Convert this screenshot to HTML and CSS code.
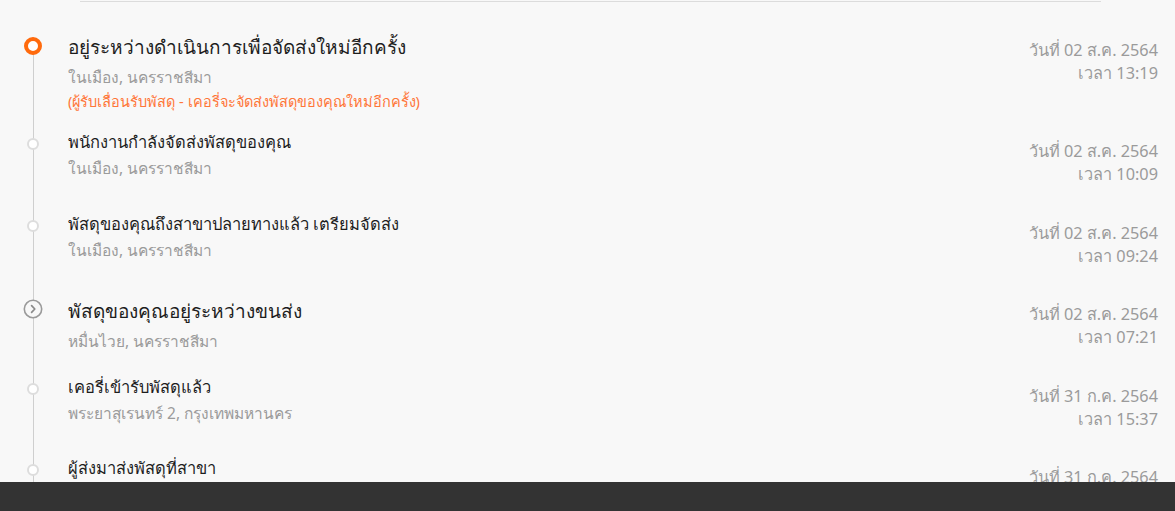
FILE: index.html
```html
<!DOCTYPE html>
<html lang="th">
<head>
<meta charset="utf-8">
<title>Tracking</title>
<link rel="stylesheet" href="styles.css">
</head>
<body>
<div class="page">
  <div class="top-rule"></div>
  <ul class="timeline">
    <li class="event event-big">
      <div class="marker"><span class="dot dot-current"></span></div>
      <div class="info">
        <div class="title">อยู่ระหว่างดำเนินการเพื่อจัดส่งใหม่อีกครั้ง</div>
        <div class="place">ในเมือง, นครราชสีมา</div>
        <div class="note">(ผู้รับเลื่อนรับพัสดุ - เคอรี่จะจัดส่งพัสดุของคุณใหม่อีกครั้ง)</div>
      </div>
      <div class="when">
        <div>วันที่ 02 ส.ค. 2564</div>
        <div>เวลา 13:19</div>
      </div>
    </li>
    <li class="event">
      <div class="marker"><span class="dot"></span></div>
      <div class="info">
        <div class="title">พนักงานกำลังจัดส่งพัสดุของคุณ</div>
        <div class="place">ในเมือง, นครราชสีมา</div>
      </div>
      <div class="when">
        <div>วันที่ 02 ส.ค. 2564</div>
        <div>เวลา 10:09</div>
      </div>
    </li>
    <li class="event">
      <div class="marker"><span class="dot"></span></div>
      <div class="info">
        <div class="title">พัสดุของคุณถึงสาขาปลายทางแล้ว เตรียมจัดส่ง</div>
        <div class="place">ในเมือง, นครราชสีมา</div>
      </div>
      <div class="when">
        <div>วันที่ 02 ส.ค. 2564</div>
        <div>เวลา 09:24</div>
      </div>
    </li>
    <li class="event event-big">
      <div class="marker">
        <span class="dot dot-transit">
          <svg viewBox="0 0 20 20" width="20" height="20"><circle cx="10" cy="10" r="8.7" fill="#f8f8f8" stroke="#9a9a9a" stroke-width="1.6"/><path d="M8.6 6.6 L11.8 10 L8.6 13.4" fill="none" stroke="#8a8a8a" stroke-width="1.7" stroke-linecap="round" stroke-linejoin="round"/></svg>
        </span>
      </div>
      <div class="info">
        <div class="title">พัสดุของคุณอยู่ระหว่างขนส่ง</div>
        <div class="place">หมื่นไวย, นครราชสีมา</div>
      </div>
      <div class="when">
        <div>วันที่ 02 ส.ค. 2564</div>
        <div>เวลา 07:21</div>
      </div>
    </li>
    <li class="event">
      <div class="marker"><span class="dot"></span></div>
      <div class="info">
        <div class="title">เคอรี่เข้ารับพัสดุแล้ว</div>
        <div class="place">พระยาสุเรนทร์ 2, กรุงเทพมหานคร</div>
      </div>
      <div class="when">
        <div>วันที่ 31 ก.ค. 2564</div>
        <div>เวลา 15:37</div>
      </div>
    </li>
    <li class="event">
      <div class="marker"><span class="dot"></span></div>
      <div class="info">
        <div class="title">ผู้ส่งมาส่งพัสดุที่สาขา</div>
      </div>
      <div class="when">
        <div>วันที่ 31 ก.ค. 2564</div>
      </div>
    </li>
  </ul>
</div>
<footer class="footer-bar"></footer>
</body>
</html>
```
FILE: styles.css
```css
html, body {
  margin: 0;
  padding: 0;
}
body {
  background: #f8f8f8;
  font-family: "Noto Sans", "DejaVu Sans", sans-serif;
  color: #222;
  height: 511px;
  overflow: hidden;
}
.page {
  height: 482px;
  overflow: hidden;
}
.top-rule {
  margin: 1px 74px 0 80px;
  border-top: 1px solid #dcdcdc;
}
.timeline {
  list-style: none;
  margin: 0;
  padding: 32px 17px 0 0;
  background: linear-gradient(#cfcfcf, #cfcfcf) no-repeat 33px 52px / 1px 100%;
}
.event {
  display: flex;
  align-items: flex-start;
  box-sizing: border-box;
  min-height: 81.5px;
  padding-bottom: 22px;
}
.marker {
  width: 68px;
  flex: none;
  display: flex;
  justify-content: center;
  padding: 3px 2px 0 0;
  box-sizing: border-box;
}
.dot {
  display: block;
  box-sizing: border-box;
  width: 12px;
  height: 12px;
  border-radius: 50%;
  border: 2px solid #dddddd;
  background: #ffffff;
}
.dot-current {
  width: 18px;
  height: 18px;
  border: 4px solid #ff6a0d;
}
.dot-transit {
  width: 20px;
  height: 20px;
  margin-top: -2px;
  border: none;
  background: none;
}
.dot-transit svg { display: block; }
.info {
  flex: 1;
}
.title {
  font-size: 16.5px;
  line-height: 24px;
  margin-top: -5px;
  color: #1e1e1e;
}
.event-big .title {
  font-size: 19px;
  line-height: 27px;
  margin-top: 0;
}
.place {
  font-size: 15.5px;
  line-height: 24px;
  margin-top: 2px;
  color: #9b9b9b;
}
.event-big .place {
  margin-top: 4px;
}
.note {
  font-size: 14.5px;
  line-height: 22px;
  margin: 1px 0 1px;
  color: #ff7638;
}
.when {
  text-align: right;
  font-size: 16.3px;
  line-height: 23px;
  color: #9b9b9b;
  padding-top: 5px;
}
.footer-bar {
  height: 29px;
  background: #333333;
}
```
